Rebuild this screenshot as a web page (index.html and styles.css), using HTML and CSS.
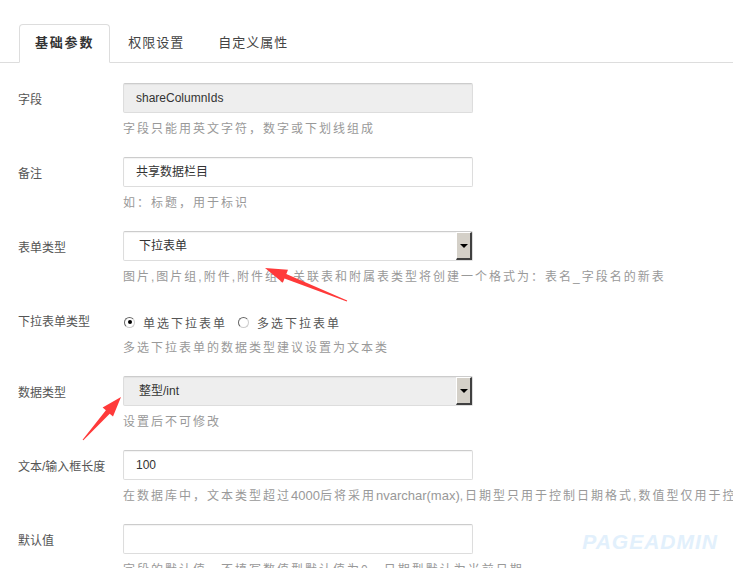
FILE: index.html
```html
<!DOCTYPE html>
<html lang="zh-CN">
<head>
  <meta charset="UTF-8">
  <title>字段设置</title>
  <link rel="stylesheet" href="styles.css">
</head>
<body>
  <div class="tabs">
    <div class="tab active">基础参数</div>
    <div class="tab">权限设置</div>
    <div class="tab">自定义属性</div>
  </div>

  <div class="form">
    <div class="row">
      <div class="label">字段</div>
      <div class="field">
        <div class="input disabled">shareColumnIds</div>
        <div class="help">字段只能用英文字符，数字或下划线组成</div>
      </div>
    </div>

    <div class="row">
      <div class="label">备注</div>
      <div class="field">
        <div class="input">共享数据栏目</div>
        <div class="help">如：标题，用于标识</div>
      </div>
    </div>

    <div class="row">
      <div class="label">表单类型</div>
      <div class="field">
        <div class="input select"><span class="select-text">下拉表单</span><span class="select-btn"></span></div>
        <div class="help">图片,图片组,附件,附件组，关联表和附属表类型将创建一个格式为：表名_字段名的新表</div>
      </div>
    </div>

    <div class="row row-radio">
      <div class="label">下拉表单类型</div>
      <div class="field">
        <div class="radios">
          <span class="radio checked"></span><span class="radio-text">单选下拉表单</span>
          <span class="radio"></span><span class="radio-text">多选下拉表单</span>
        </div>
        <div class="help">多选下拉表单的数据类型建议设置为文本类</div>
      </div>
    </div>

    <div class="row">
      <div class="label">数据类型</div>
      <div class="field">
        <div class="input select disabled"><span class="select-text">整型/int</span><span class="select-btn"></span></div>
        <div class="help">设置后不可修改</div>
      </div>
    </div>

    <div class="row">
      <div class="label">文本/输入框长度</div>
      <div class="field">
        <div class="input">100</div>
        <div class="help">在数据库中，文本类型超过<span class="latin">4000</span>后将采用<span class="latin">nvarchar(max)</span>,日期型只用于控制日期格式,数值型仅用于控制</div>
      </div>
    </div>

    <div class="row">
      <div class="label">默认值</div>
      <div class="field">
        <div class="input"></div>
        <div class="help">字段的默认值，不填写数值型默认值为0，日期型默认为当前日期</div>
      </div>
    </div>
  </div>

  <!-- annotation arrows drawn over the form -->
  <svg class="arrows" width="733" height="568" viewBox="0 0 733 568">
    <polygon fill="#ff3a3a" points="265,268 288,269.8 286.3,274 347.2,300.5 346.8,301.5 284.5,278.6 282.8,282.8"/>
    <polygon fill="#ff3a3a" points="121,397 113,416.6 109.7,413.7 83.4,440.3 82.6,439.7 105.9,410.3 102.6,407.4"/>
  </svg>

  <div class="watermark">PAGEADMIN</div>
</body>
</html>
```

FILE: styles.css
```css
html, body {
  margin: 0;
  padding: 0;
  background: #fff;
  overflow: hidden;
}
body {
  font-family: "Liberation Sans", "Noto Sans CJK SC", sans-serif;
  font-size: 12px;
  color: #555;
  position: relative;
  height: 568px;
}
.tabs {
  display: flex;
  margin-top: 24px;
  padding-left: 19px;
  border-bottom: 1px solid #ddd;
  height: 38px;
}
.tab {
  padding: 0 15px;
  line-height: 36px;
  border: 1px solid transparent;
  border-radius: 4px 4px 0 0;
  margin-right: 2px;
  font-size: 13px;
  letter-spacing: 1px;
  color: #444;
}
.tab.active {
  border-color: #ddd;
  border-bottom-color: #fff;
  background: #fff;
  font-weight: bold;
  color: #333;
  height: 37px;
  letter-spacing: 1.8px;
}
.form {
  padding: 20px 0 0 18px;
}
.row {
  display: flex;
  margin-bottom: 18px;
}
.label {
  width: 105px;
  flex-shrink: 0;
  line-height: 30px;
  padding-top: 2px;
  color: #555;
}
.field {
  flex: 1;
  min-width: 0;
}
.input {
  box-sizing: border-box;
  width: 350px;
  height: 30px;
  border: 1px solid #ddd;
  border-top-color: #ccc;
  border-radius: 2px;
  box-shadow: inset 0 1px 1px rgba(0, 0, 0, 0.05);
  padding: 0 12px;
  line-height: 28px;
  color: #333;
  background: #fff;
  white-space: nowrap;
}
.input.disabled {
  background: #eee;
}
.select {
  display: flex;
  padding: 0 0 0 15px;
}
.select-text {
  flex: 1;
}
.select-btn {
  width: 16px;
  height: 28px;
  box-sizing: border-box;
  background: #d4d0c8;
  border-left: 1px solid #fff;
  border-top: 1px solid #fff;
  border-right: 2px solid #404040;
  border-bottom: 2px solid #404040;
  position: relative;
}
.select-btn::after {
  content: "";
  position: absolute;
  left: 3px;
  top: 11px;
  border-left: 4px solid transparent;
  border-right: 4px solid transparent;
  border-top: 4px solid #000;
}
.help {
  margin-top: 6px;
  line-height: 20px;
  font-size: 12px;
  letter-spacing: 2px;
  color: #999;
  white-space: nowrap;
}
.help .latin {
  letter-spacing: 0;
  font-size: 13px;
}
.row-radio .help {
  margin-top: 2px;
}
.radios {
  display: flex;
  align-items: center;
  height: 28px;
  margin-top: 3px;
}
.radio {
  width: 11px;
  height: 11px;
  box-sizing: border-box;
  border-radius: 50%;
  border: 1px solid #666;
  border-right-color: #ccc;
  border-bottom-color: #ccc;
  margin: 0 8px 0 1px;
  position: relative;
}
.radio.checked::after {
  content: "";
  position: absolute;
  left: 2.5px;
  top: 2.5px;
  width: 4px;
  height: 4px;
  border-radius: 50%;
  background: #000;
}
.radio-text {
  font-size: 12px;
  letter-spacing: 2px;
  color: #555;
  margin-right: 10px;
}
.arrows {
  position: absolute;
  left: 0;
  top: 0;
  pointer-events: none;
}
.watermark {
  position: absolute;
  right: 15px;
  top: 530px;
  font-weight: bold;
  font-style: italic;
  font-size: 21px;
  letter-spacing: 1px;
  color: #e2f0fc;
}
```
